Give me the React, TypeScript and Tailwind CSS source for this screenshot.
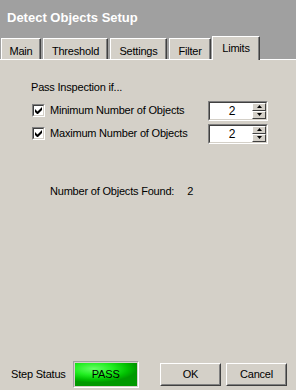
import React from "react";

const font = { fontFamily: '"Liberation Sans", Arial, sans-serif' };

function Tab({ label, w, selected }: { label: string; w: number; selected?: boolean }) {
  return (
    <div
      className={
        (selected ? "relative z-10 -mb-px -ml-px h-[24px] pt-[3px] " : "h-[21px] pt-[4px] ") +
        "flex shrink-0 items-start justify-center whitespace-nowrap border-l border-t border-r border-l-white border-t-white border-r-[#404040] bg-[#d4d0c8] text-[11px] tracking-[-0.2px] text-black"
      }
      style={{ width: w, boxShadow: "inset -1px 0 0 #808080" }}
    >
      {label}
    </div>
  );
}

function Check() {
  return (
    <div className="flex h-[13px] w-[13px] shrink-0 items-center justify-center border border-t-[#808080] border-l-[#808080] border-r-white border-b-white">
      <div className="flex h-[11px] w-[11px] items-center justify-center border border-t-[#404040] border-l-[#404040] border-r-[#d4d0c8] border-b-[#d4d0c8] bg-white">
        <svg width="7" height="7" viewBox="0 0 7 7">
          <path d="M0 2v3l2 2h1l4-4V0L2.5 4.5z" fill="#000" />
        </svg>
      </div>
    </div>
  );
}

function SpinBtn({ up }: { up?: boolean }) {
  return (
    <div className="flex h-[9px] w-[14px] items-center justify-center border border-t-white border-l-white border-r-[#404040] border-b-[#404040] bg-[#d4d0c8]">
      <svg width="5" height="3" viewBox="0 0 5 3">
        {up ? <path d="M2.5 0L5 3H0z" fill="#000" /> : <path d="M0 0h5L2.5 3z" fill="#000" />}
      </svg>
    </div>
  );
}

function Spin() {
  return (
    <div className="flex h-[20px] w-[60px] shrink-0 border border-t-[#808080] border-l-[#808080] border-r-white border-b-white">
      <div className="flex flex-1 border border-t-[#404040] border-l-[#404040] border-r-[#d4d0c8] border-b-[#d4d0c8] bg-white">
        <div className="flex flex-1 items-center justify-center pl-[2px] text-[12px] text-black">2</div>
        <div className="flex flex-col">
          <SpinBtn up />
          <SpinBtn />
        </div>
      </div>
    </div>
  );
}

function Button({ label }: { label: string }) {
  return (
    <div className="flex h-[23px] w-[61px] border border-t-white border-l-white border-r-[#404040] border-b-[#404040] bg-[#d4d0c8]">
      <div className="flex flex-1 items-center justify-center border border-t-[#d4d0c8] border-l-[#d4d0c8] border-r-[#808080] border-b-[#808080] text-[11px] text-black">
        {label}
      </div>
    </div>
  );
}

export default function App() {
  return (
    <div className="flex h-[390px] w-[296px] flex-col bg-[#d4d0c8] tracking-[-0.2px]" style={font}>
      <div className="flex h-[59px] flex-col bg-[#a0a0a0]">
        <div className="pl-[7px] pt-[8px] text-[13px] font-bold tracking-normal text-white">Detect Objects Setup</div>
        <div className="mt-auto flex items-end gap-[2px] pl-[1px]">
          <Tab label="Main" w={40} />
          <Tab label="Threshold" w={65} />
          <Tab label="Settings" w={57} />
          <Tab label="Filter" w={42} />
          <Tab label="Limits" w={48} selected />
        </div>
      </div>
      <div className="flex flex-1 flex-col border-t border-t-white">
        <div className="pl-[31px] pt-[19px] text-[11px] text-black">Pass Inspection if...</div>
        <div className="mt-[5px] flex flex-col gap-[3px] pl-[32px]">
          <div className="flex h-[20px] items-center">
            <Check />
            <div className="ml-[5px] w-[158px] whitespace-nowrap text-[11px] text-black">Minimum Number of Objects</div>
            <Spin />
          </div>
          <div className="flex h-[20px] items-center">
            <Check />
            <div className="ml-[5px] w-[158px] whitespace-nowrap text-[11px] text-black">Maximum Number of Objects</div>
            <Spin />
          </div>
        </div>
        <div className="mt-[39px] flex whitespace-nowrap pl-[50px] text-[11px] text-black">
          <span>Number of Objects Found:</span>
          <span className="ml-[13px]">2</span>
        </div>
        <div className="mt-auto flex items-center pb-[2px] pl-[11px]">
          <div className="whitespace-nowrap text-[11px] text-black">Step Status</div>
          <div className="ml-[7px] flex h-[27px] w-[66px] shrink-0 border border-t-[#a0a0a0] border-l-[#a0a0a0] border-r-white border-b-white bg-[#d4d0c8] p-[1px]">
            <div
              className="flex flex-1 items-center justify-center text-[11px] text-black"
              style={{
                background:
                  "radial-gradient(ellipse 70% 60% at 30% 25%, #66ff66 0%, #22ee22 45%, #00c000 80%, #009900 100%)",
              }}
            >
              PASS
            </div>
          </div>
          <div className="ml-auto mr-[9px] mb-[1px] flex gap-[5px]">
            <Button label="OK" />
            <Button label="Cancel" />
          </div>
        </div>
      </div>
    </div>
  );
}
